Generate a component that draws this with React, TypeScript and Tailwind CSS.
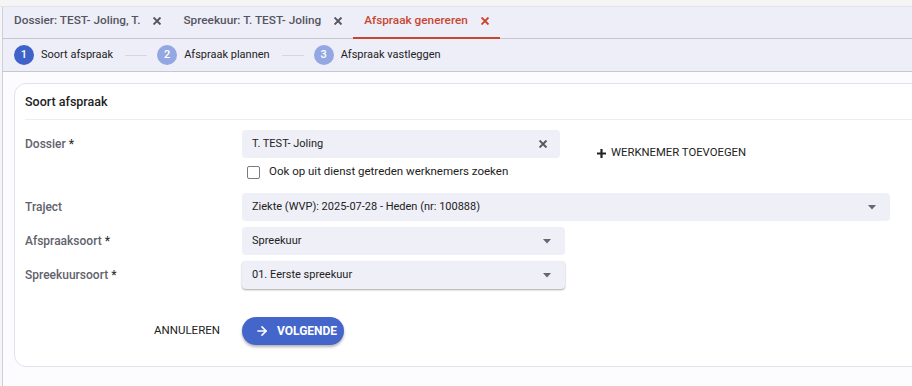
import { ArrowRight } from 'lucide-react'

function CloseIcon({ className }: { className?: string }) {
  return (
    <svg width="8" height="8" viewBox="0 0 10 10" className={className} fill="none" stroke="currentColor" strokeWidth="2.4" strokeLinecap="square">
      <path d="M1.5 1.5l7 7M8.5 1.5l-7 7" />
    </svg>
  )
}

function Caret() {
  return (
    <svg width="8" height="5" viewBox="0 0 8 5" className="text-[#666670]">
      <path d="M0 0h8L4 4.5z" fill="currentColor" />
    </svg>
  )
}

const tabs = [
  { label: 'Dossier: TEST- Joling, T.', active: false },
  { label: 'Spreekuur: T. TEST- Joling', active: false },
  { label: 'Afspraak genereren', active: true },
]

const steps = [
  { n: 1, label: 'Soort afspraak', done: true },
  { n: 2, label: 'Afspraak plannen', done: false },
  { n: 3, label: 'Afspraak vastleggen', done: false },
]

function Select({ value, width, shadow }: { value: string; width: string; shadow?: boolean }) {
  return (
    <div
      className={`${width} h-[28px] bg-[#efeff8] rounded-[4px] flex items-center justify-between pl-[10px] pr-[14px] text-[11px] text-[#222] ${shadow ? 'shadow-[0_1px_2px_rgba(0,0,0,0.35)]' : ''}`}
    >
      <span>{value}</span>
      <Caret />
    </div>
  )
}

function Label({ text }: { text: string }) {
  return (
    <div className="w-[217px] shrink-0 text-[12px] font-medium text-[#62626c]">
      {text} <span className="text-[#333]">*</span>
    </div>
  )
}

export default function App() {
  return (
    <div className="w-[912px] h-[386px] bg-[#f5f5f5] font-['Roboto',sans-serif] overflow-hidden">
      <div className="h-[7px] border-b border-[#e4e4e8]" />
      <div className="ml-[2px] h-[379px] border-l border-[#cfcfdb] flex flex-col">
        <div className="h-[32px] shrink-0 bg-[#eeeef8] border-b border-[#c6c6d2] flex">
          {tabs.map((t) => (
            <div
              key={t.label}
              className={`flex items-center gap-[13px] px-[11px] pb-[3px] text-[11.8px] font-medium ${
                t.active
                  ? 'text-[#c8462f] border-b-2 border-[#c8462f] -mb-px'
                  : 'text-[#555560]'
              }`}
            >
              <span>{t.label}</span>
              <CloseIcon className={t.active ? 'text-[#c8462f]' : 'text-[#55555f]'} />
            </div>
          ))}
        </div>

        <div className="h-[33px] shrink-0 bg-[#eeeef8] border-b border-[#c6c6d2] flex items-center pl-[11px]">
          {steps.map((s, i) => (
            <div key={s.n} className="flex items-center">
              {i > 0 && <div className="w-[22px] h-px bg-[#d6d6e0] ml-[12px] mr-[10px]" />}
              <div
                className={`w-[20px] h-[20px] rounded-full flex items-center justify-center text-white text-[11px] font-medium ${
                  s.done ? 'bg-[#3f62c8]' : 'bg-[#93a7e2]'
                }`}
              >
                {s.n}
              </div>
              <span className="ml-[7px] text-[11px] text-[#222]">{s.label}</span>
            </div>
          ))}
        </div>

        <div className="flex-1 bg-[#fcfbfe] pt-[11px] pl-[11px]">
          <div className="w-[920px] bg-white border border-[#e2e2ea] rounded-[12px] pb-[21px]">
            <div className="h-[35px] flex items-center pl-[10px] pt-px text-[12.5px] font-medium text-[#222]">
              Soort afspraak
            </div>
            <div className="ml-[10px] border-b border-[#ececf3]" />

            <div className="pl-[10px] pt-[10px] flex flex-col gap-[6px]">
              <div className="flex">
                <div className="h-[28px] flex items-center">
                  <Label text="Dossier" />
                </div>
                <div className="flex flex-col">
                  <div className="w-[318px] h-[28px] bg-[#efeff8] rounded-[4px] flex items-center justify-between pl-[10px] pr-[13px] text-[11px] text-[#222]">
                    <span>T. TEST- Joling</span>
                    <CloseIcon className="text-[#55555f]" />
                  </div>
                  <label className="mt-[5px] mb-[6px] h-[18px] flex items-center pl-[5px] gap-[9px] text-[11.5px] text-[#222]">
                    <span className="w-[13px] h-[13px] border-[1.5px] border-[#7a7a80] rounded-[2px] bg-white" />
                    Ook op uit dienst getreden werknemers zoeken
                  </label>
                </div>
                <button className="ml-[37px] mt-[14px] h-[18px] flex items-center gap-[5px] text-[11.3px] text-[#222] uppercase">
                  <svg width="9" height="9" viewBox="0 0 10 10" fill="none" stroke="currentColor" strokeWidth="2.4">
                    <path d="M5 0v10M0 5h10" />
                  </svg>
                  Werknemer toevoegen
                </button>
              </div>

              <div className="flex items-center">
                <div className="w-[217px] shrink-0 text-[12px] font-medium text-[#62626c]">Traject</div>
                <Select value="Ziekte (WVP): 2025-07-28 - Heden (nr: 100888)" width="w-[648px]" />
              </div>

              <div className="flex items-center">
                <Label text="Afspraaksoort" />
                <Select value="Spreekuur" width="w-[323px]" />
              </div>

              <div className="flex items-center">
                <Label text="Spreekuursoort" />
                <Select value="01. Eerste spreekuur" width="w-[323px]" shadow />
              </div>

              <div className="flex items-center mt-[22px]">
                <div className="w-[217px] shrink-0 flex justify-end pr-[22px]">
                  <button className="text-[11.5px] text-[#222] uppercase">Annuleren</button>
                </div>
                <button className="w-[102px] h-[28px] rounded-full bg-[#4466cb] shadow-[0_2px_3px_rgba(0,0,0,0.3)] flex items-center pl-[13px] gap-[8px] text-white text-[12px] font-bold uppercase">
                  <ArrowRight size={14} strokeWidth={2.75} />
                  Volgende
                </button>
              </div>
            </div>
          </div>
        </div>
      </div>
    </div>
  )
}
